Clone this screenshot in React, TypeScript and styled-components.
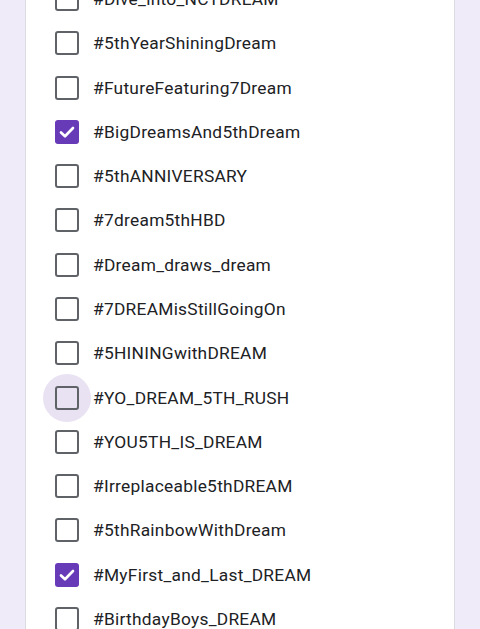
import React from "react";
import styled, { createGlobalStyle } from "styled-components";

const options = [
  { label: "#Dive_into_NCTDREAM", checked: false },
  { label: "#5thYearShiningDream", checked: false },
  { label: "#FutureFeaturing7Dream", checked: false },
  { label: "#BigDreamsAnd5thDream", checked: true },
  { label: "#5thANNIVERSARY", checked: false },
  { label: "#7dream5thHBD", checked: false },
  { label: "#Dream_draws_dream", checked: false },
  { label: "#7DREAMisStillGoingOn", checked: false },
  { label: "#5HININGwithDREAM", checked: false },
  { label: "#YO_DREAM_5TH_RUSH", checked: false, hover: true },
  { label: "#YOU5TH_IS_DREAM", checked: false },
  { label: "#Irreplaceable5thDREAM", checked: false },
  { label: "#5thRainbowWithDream", checked: false },
  { label: "#MyFirst_and_Last_DREAM", checked: true },
  { label: "#BirthdayBoys_DREAM", checked: false },
];

function App() {
  return (
    <>
      <GlobalStyle />
      <Card>
        <OptionList>
          {options.map((opt) => (
            <OptionRow key={opt.label}>
              <BoxHit $hover={!!opt.hover}>
                <Box $checked={opt.checked}>
                  {opt.checked && (
                    <svg width="18" height="18" viewBox="0 0 18 18">
                      <path
                        d="M3.6 9.4 L7.2 12.8 L14.4 5.4"
                        fill="none"
                        stroke="#fff"
                        strokeWidth="2.4"
                        strokeLinecap="round"
                        strokeLinejoin="round"
                      />
                    </svg>
                  )}
                </Box>
              </BoxHit>
              <Label>{opt.label}</Label>
            </OptionRow>
          ))}
        </OptionList>
      </Card>
    </>
  );
}

export default App;

const GlobalStyle = createGlobalStyle`
  html, body {
    margin: 0;
    padding: 0;
    background: #f0ebf8;
    overflow: hidden;
  }
  body {
    font-family: Roboto, "Liberation Sans", sans-serif;
  }
`;

const Card = styled.div`
  margin: -23px 0 0 25px;
  width: 430px;
  min-height: 700px;
  background: #fff;
  border-left: 1px solid #dadce0;
  border-right: 1px solid #dadce0;
  box-sizing: border-box;
`;

const OptionList = styled.div`
  display: flex;
  flex-direction: column;
  padding-left: 17px;
`;

const OptionRow = styled.div`
  display: flex;
  align-items: center;
  height: 44.27px;
  gap: 2px;
`;

const BoxHit = styled.div<{ $hover: boolean }>`
  width: 48px;
  height: 48px;
  flex: none;
  border-radius: 50%;
  display: flex;
  align-items: center;
  justify-content: center;
  background: ${({ $hover }) => ($hover ? "#e8e2f3" : "transparent")};
`;

const Box = styled.div<{ $checked: boolean }>`
  width: 24px;
  height: 24px;
  box-sizing: border-box;
  border-radius: 3px;
  border: ${({ $checked }) => ($checked ? "none" : "2.5px solid #5f6368")};
  background: ${({ $checked }) => ($checked ? "#673ab7" : "transparent")};
  display: flex;
  align-items: center;
  justify-content: center;
  svg {
    width: 20px;
    height: 20px;
  }
`;

const Label = styled.span`
  font-size: 17.33px;
  color: #202124;
  letter-spacing: 0.27px;
  white-space: nowrap;
`;
